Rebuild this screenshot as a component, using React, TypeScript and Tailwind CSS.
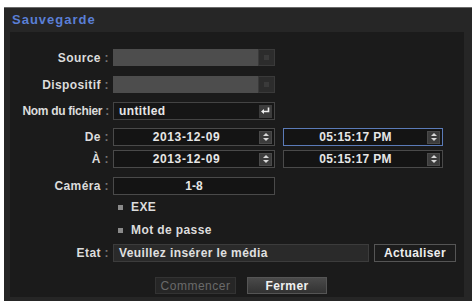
import React from "react";

const font = { fontFamily: '"Liberation Sans", Arial, sans-serif' };

function Spinner() {
  return (
    <div className="w-[13px] h-[13px] bg-[#3c3c3c] border border-[#4a4a4a] flex flex-col items-center justify-center gap-[2px]">
      <svg width="6" height="3" viewBox="0 0 6 3"><path d="M0 3 L3 0 L6 3 Z" fill="#d8d8d8" /></svg>
      <svg width="6" height="3" viewBox="0 0 6 3"><path d="M0 0 L3 3 L6 0 Z" fill="#d8d8d8" /></svg>
    </div>
  );
}

function Label({ text, tight }: { text: string; tight?: boolean }) {
  return (
    <div
      className={`w-[103px] shrink-0 text-right pr-[4px] text-[12px] font-bold text-[#dcdcdc] leading-none whitespace-nowrap ${tight ? "tracking-[-0.3px]" : "tracking-[0.4px]"}`}
    >
      {text} <span className="text-[#777]">:</span>
    </div>
  );
}

function DateBox({ value, active, wide }: { value: string; active?: boolean; wide?: boolean }) {
  return (
    <div
      className={`h-[18px] flex items-center bg-[#141414] border ${active ? "border-[#5b7bb8]" : "border-[#4a4a4a]"}`}
    >
      <span
        className={`flex-1 text-center text-[12px] font-bold text-[#e6e6e6] leading-none ${wide ? "tracking-[0.6px]" : "tracking-[0.3px]"}`}
      >
        {value}
      </span>
      <div className="pr-[2px]">
        <Spinner />
      </div>
    </div>
  );
}

export default function App() {
  return (
    <div className="w-[473px] h-[301px] bg-white overflow-hidden" style={font}>
      <div className="ml-[4px] mt-[7px] w-[468px] h-[294px] bg-[#262626] border-t border-[#6a6a6a] flex flex-col">
        {/* title */}
        <div className="h-[24px] flex items-center pl-[8px] text-[13px] tracking-[1px] font-bold text-[#5a7fd6]">
          Sauvegarde
        </div>

        <div className="mx-[6px] w-[454px] h-[265px] bg-[#1b1b1b] flex flex-col">
          {/* Source */}
          <div className="flex items-center mt-[17px] h-[17px]">
            <Label text="Source" />
            <div className="w-[145px] h-[17px] bg-[#4d4d4d]" />
            <div className="w-[17px] h-[17px] bg-[#2c2c2c] border border-[#3a3a3a] flex items-center justify-center">
              <div className="w-[5px] h-[5px] bg-[#3a3a3a]" />
            </div>
          </div>

          {/* Dispositif */}
          <div className="flex items-center mt-[10px] h-[17px]">
            <Label text="Dispositif" />
            <div className="w-[145px] h-[17px] bg-[#4d4d4d]" />
            <div className="w-[17px] h-[17px] bg-[#2c2c2c] border border-[#3a3a3a] flex items-center justify-center">
              <div className="w-[5px] h-[5px] bg-[#3a3a3a]" />
            </div>
          </div>

          {/* Nom du fichier */}
          <div className="flex items-center mt-[9px] h-[18px]">
            <Label text="Nom du fichier" tight />
            <div className="w-[162px] h-[18px] bg-[#161616] border border-[#444] flex items-center pl-[5px] pr-[2px]">
              <span className="flex-1 text-[12px] tracking-[0.4px] font-bold text-[#e6e6e6] leading-none">untitled</span>
              <div className="w-[13px] h-[13px] bg-[#3c3c3c] flex items-center justify-center">
                <svg width="9" height="8" viewBox="0 0 9 8">
                  <path d="M7.5 0.5 V4.5 H2" stroke="#eee" strokeWidth="1.6" fill="none" />
                  <path d="M0 4.5 L3 2 V7 Z" fill="#eee" />
                </svg>
              </div>
            </div>
          </div>

          {/* De */}
          <div className="flex items-center mt-[8px] h-[18px]">
            <Label text="De" />
            <div className="w-[162px]">
              <DateBox value="2013-12-09" wide />
            </div>
            <div className="w-[160px] ml-[8px]">
              <DateBox value="05:15:17 PM" active />
            </div>
          </div>

          {/* À */}
          <div className="flex items-center mt-[4px] h-[18px]">
            <Label text="À" />
            <div className="w-[162px]">
              <DateBox value="2013-12-09" wide />
            </div>
            <div className="w-[160px] ml-[8px]">
              <DateBox value="05:15:17 PM" />
            </div>
          </div>

          {/* Caméra */}
          <div className="flex items-center mt-[9px] h-[18px]">
            <Label text="Caméra" />
            <div className="w-[162px] h-[18px] bg-[#141414] border border-[#4a4a4a] flex items-center justify-center">
              <span className="text-[12px] font-bold text-[#e6e6e6] leading-none">1-8</span>
            </div>
          </div>

          {/* EXE */}
          <div className="flex items-center mt-[6px] h-[12px] pl-[108px] gap-[8px]">
            <div className="w-[5px] h-[5px] bg-[#8a8a8a]" />
            <span className="text-[12px] tracking-[0.4px] font-bold text-[#dcdcdc] leading-none">EXE</span>
          </div>

          {/* Mot de passe */}
          <div className="flex items-center mt-[11px] h-[12px] pl-[108px] gap-[8px]">
            <div className="w-[5px] h-[5px] bg-[#8a8a8a]" />
            <span className="text-[12px] tracking-[0.4px] font-bold text-[#dcdcdc] leading-none">Mot de passe</span>
          </div>

          {/* Etat */}
          <div className="flex items-center mt-[8px] h-[18px]">
            <Label text="Etat" />
            <div className="w-[256px] h-[18px] bg-[#2a2a2a] border border-[#3c3c3c] flex items-center pl-[5px]">
              <span className="text-[12px] tracking-[0.4px] font-bold text-[#e0e0e0] leading-none whitespace-nowrap">
                Veuillez insérer le média
              </span>
            </div>
            <div className="ml-[5px] w-[82px] h-[18px] bg-[#1c1c1c] border border-[#555] flex items-center justify-center">
              <span className="text-[12px] tracking-[0.4px] font-bold text-[#eeeeee] leading-none">Actualiser</span>
            </div>
          </div>

          {/* buttons */}
          <div className="flex mt-[15px] h-[17px] pl-[145px] gap-[11px]">
            <div className="w-[81px] h-[17px] bg-[#262626] border border-[#333] flex items-center justify-center">
              <span className="text-[12px] tracking-[0.5px] text-[#6a6a6a] leading-none">Commencer</span>
            </div>
            <div className="w-[80px] h-[17px] bg-gradient-to-b from-[#4a4a4a] to-[#333] border border-[#555] flex items-center justify-center">
              <span className="text-[12px] tracking-[0.4px] font-bold text-[#f0f0f0] leading-none">Fermer</span>
            </div>
          </div>
        </div>
      </div>
    </div>
  );
}
